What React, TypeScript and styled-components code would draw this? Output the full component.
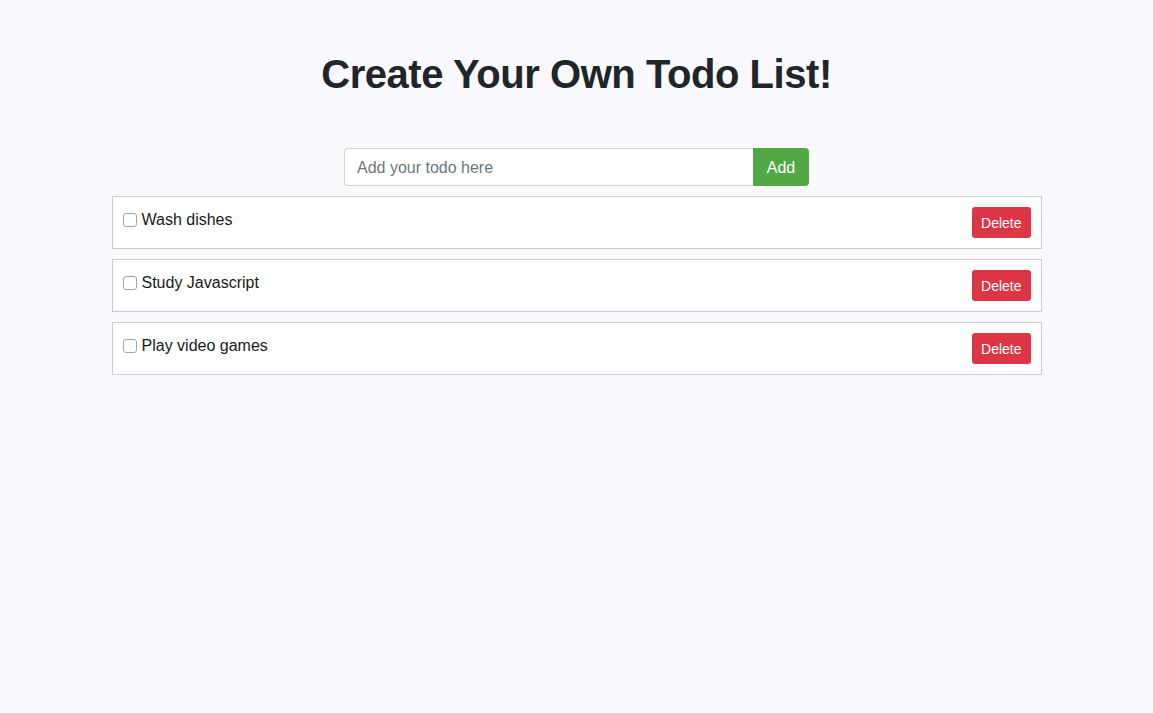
import React, { useState } from "react";
import styled, { createGlobalStyle } from "styled-components";

const Global = createGlobalStyle`
  html, body { margin: 0; padding: 0; }
  body {
    background: #f8f8fd;
    font-family: "Liberation Sans", Arial, sans-serif;
    font-size: 16px;
    line-height: 1.5;
    color: #212529;
  }
`;

const Container = styled.div`
  width: 930px;
  margin: 0 auto;
  padding-top: 50px;
`;

const Title = styled.h1`
  margin: 0 0 50px;
  text-align: center;
  font-size: 40px;
  font-weight: 700;
  line-height: 48px;
  color: #212529;
  letter-spacing: -0.45px;
`;

const Form = styled.form`
  display: flex;
  width: 465px;
  margin: 0 auto 10px;
  height: 38px;
`;

const Input = styled.input`
  flex: 1;
  min-width: 0;
  box-sizing: border-box;
  height: 38px;
  padding: 7px 12px 5px;
  border: 1px solid #ced4da;
  border-right: none;
  border-radius: 4px 0 0 4px;
  background: #fff;
  font-family: inherit;
  font-size: 16px;
  color: #495057;
  outline: none;
  &::placeholder { color: #6c757d; }
`;

const AddButton = styled.button`
  width: 56px;
  height: 38px;
  padding: 2px 0 0;
  border: none;
  border-radius: 0 4px 4px 0;
  background: #52a845;
  color: #fff;
  font-family: inherit;
  font-size: 16px;
  cursor: pointer;
`;

const List = styled.ul`
  list-style: none;
  margin: 0;
  padding: 0;
  display: flex;
  flex-direction: column;
  gap: 10px;
`;

const Item = styled.li`
  display: flex;
  justify-content: space-between;
  align-items: flex-start;
  padding: 10px;
  border: 1px solid #cccccc;
  background: #fff;
`;

const Label = styled.label`
  display: flex;
  align-items: center;
  height: 24px;
  font-size: 16px;
  color: #1a1a1a;
`;

const LabelText = styled.span`
  padding-top: 2px;
`;

const Check = styled.input`
  appearance: none;
  width: 14px;
  height: 14px;
  margin: 1px 5px 0 0;
  border: 1px solid #a5a5a5;
  border-radius: 3px;
  background: #fff;
  box-sizing: border-box;
  &:checked { background: #1e7cf2; border-color: #1e7cf2; }
`;

const DeleteButton = styled.button`
  height: 31px;
  padding: 0 9px;
  border: none;
  border-radius: 3px;
  background: #dc3545;
  color: #fff;
  font-family: inherit;
  font-size: 14px;
  cursor: pointer;
`;

const initial = ["Wash dishes", "Study Javascript", "Play video games"];

export default function App() {
  const [todos, setTodos] = useState(initial);
  const [text, setText] = useState("");
  return (
    <>
      <Global />
      <Container>
        <Title>Create Your Own Todo List!</Title>
        <Form
          onSubmit={(e) => {
            e.preventDefault();
            if (text.trim()) {
              setTodos([...todos, text.trim()]);
              setText("");
            }
          }}
        >
          <Input
            placeholder="Add your todo here"
            value={text}
            onChange={(e) => setText(e.target.value)}
          />
          <AddButton type="submit">Add</AddButton>
        </Form>
        <List>
          {todos.map((t, i) => (
            <Item key={i}>
              <Label>
                <Check type="checkbox" />
                <LabelText>{t}</LabelText>
              </Label>
              <DeleteButton onClick={() => setTodos(todos.filter((_, j) => j !== i))}>
                Delete
              </DeleteButton>
            </Item>
          ))}
        </List>
      </Container>
    </>
  );
}
